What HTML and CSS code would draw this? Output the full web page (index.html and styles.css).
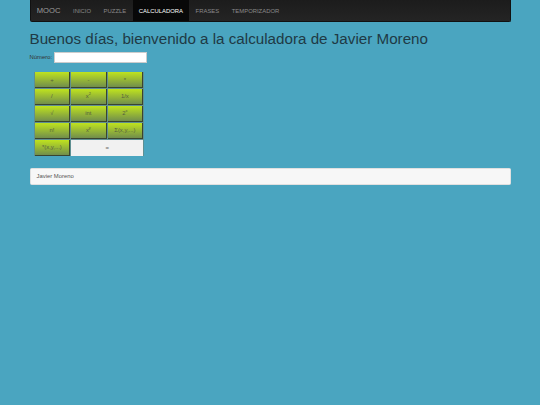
FILE: index.html
```html
<!DOCTYPE html>
<html lang="es">
<head>
<meta charset="utf-8">
<title>Calculadora</title>
<link rel="stylesheet" href="styles.css">
</head>
<body>
<div class="container">
  <nav class="navbar">
    <span class="brand">MOOC</span>
    <a class="nav-link">INICIO</a>
    <a class="nav-link">PUZZLE</a>
    <a class="nav-link active">CALCULADORA</a>
    <a class="nav-link">FRASES</a>
    <a class="nav-link">TEMPORIZADOR</a>
  </nav>
  <h1 class="title">Buenos días, bienvenido a la calculadora de Javier Moreno</h1>
  <div class="field">
    <label class="field-label">Número:</label>
    <div class="field-input"></div>
  </div>
  <div class="calc">
    <button class="key">+</button>
    <button class="key">-</button>
    <button class="key">*</button>
    <button class="key">/</button>
    <button class="key">x<sup>2</sup></button>
    <button class="key">1/x</button>
    <button class="key">√</button>
    <button class="key">int</button>
    <button class="key">2<sup>x</sup></button>
    <button class="key">n!</button>
    <button class="key">x<sup>y</sup></button>
    <button class="key">Σ(x,y,...)</button>
    <button class="key">*(x,y,...)</button>
    <button class="key-eq">=</button>
  </div>
  <footer class="footer">Javier Moreno</footer>
</div>
</body>
</html>
```
FILE: styles.css
```css
html, body {
  margin: 0;
  padding: 0;
  height: 100%;
}
body {
  background: #4aa5c0;
  font-family: "Liberation Sans", Arial, sans-serif;
  color: #333;
}
.container {
  width: 481px;
  margin-left: 29.5px;
}
.navbar {
  height: 22px;
  display: flex;
  align-items: stretch;
  box-sizing: border-box;
  background: linear-gradient(#1c1c1c, #242424);
  border: 0.5px solid #111;
  border-top: 0;
  border-radius: 0 0 2px 2px;
}
.brand {
  display: flex;
  align-items: center;
  padding: 0 6.3px;
  font-size: 7.6px;
  color: #9d9d9d;
}
.nav-link {
  display: flex;
  align-items: center;
  padding: 0 6.3px;
  font-size: 5.9px;
  color: #8a8a8a;
}
.nav-link.active {
  color: #fff;
  background: #080808;
}
.title {
  margin: 6.5px 0 0;
  font-size: 15.2px;
  line-height: 19px;
  font-weight: 400;
  color: #1f3a45;
}
.field {
  display: flex;
  align-items: center;
  gap: 2px;
  margin-top: 4.5px;
  height: 10.5px;
}
.field-label {
  font-size: 5.9px;
  color: #333;
}
.field-input {
  width: 93px;
  height: 10.5px;
  background: #fff;
  border: 0.5px solid #ccc;
  box-sizing: border-box;
}
.calc {
  display: grid;
  grid-template-columns: repeat(3, 35.6px);
  grid-auto-rows: 16px;
  gap: 0.9px;
  width: 108.6px;
  margin: 9px 0 0 4.5px;
  padding: 0.6px;
  background: #5f8f92;
}
.key, .key-eq {
  margin: 0;
  padding: 0;
  font-family: inherit;
  font-size: 5.9px;
  color: #55603f;
  box-sizing: border-box;
  border-radius: 0;
}
.key {
  background: linear-gradient(#bfe31e, #718e4c);
  border: 0;
  border-right: 1px solid #3a4430;
  border-bottom: 1px solid #3a4430;
}
.key sup {
  font-size: 4px;
  line-height: 0;
}
.key-eq {
  grid-column: span 2;
  background: #f1f1f1;
  border: 0;
  color: #666;
}
.footer {
  margin-top: 11.5px;
  height: 17px;
  display: flex;
  align-items: center;
  padding-left: 6px;
  background: #f7f7f7;
  border: 0.5px solid #e0e0e0;
  border-radius: 1.5px;
  box-sizing: border-box;
  font-size: 5.9px;
  color: #555;
}
```
